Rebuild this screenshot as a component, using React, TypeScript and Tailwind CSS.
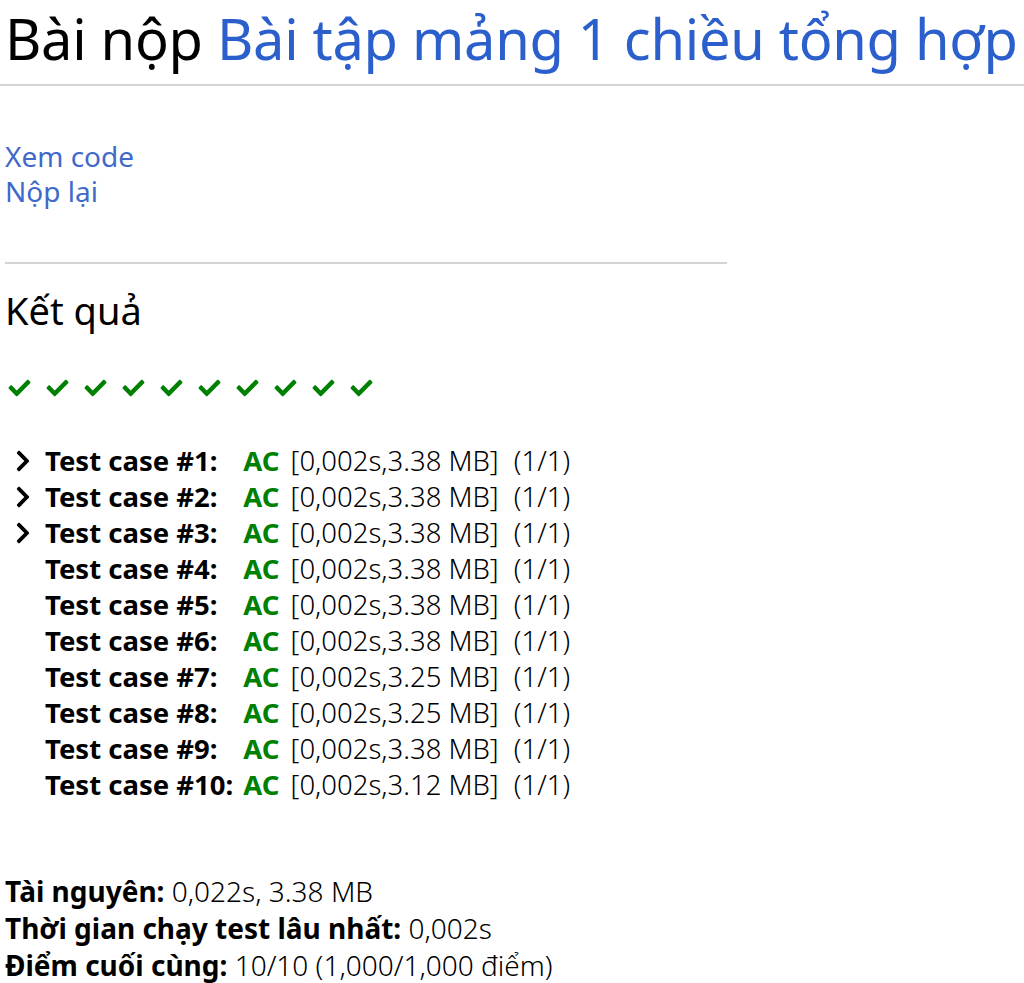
import React from 'react';

const FONT = { fontFamily: '"Noto Sans", "Open Sans", sans-serif' };

const CheckIcon: React.FC = () => (
  <svg viewBox="0 0 512 512" className="w-[23px] h-[22px] fill-[#008000]">
    <path d="M173.898 439.404l-166.4-166.4c-9.997-9.997-9.997-26.206 0-36.204l36.203-36.204c9.997-9.998 26.207-9.998 36.204 0L192 312.69 432.095 72.596c9.997-9.997 26.207-9.997 36.204 0l36.203 36.204c9.997 9.997 9.997 26.206 0 36.204l-294.4 294.401c-9.998 9.997-26.207 9.997-36.204-.001z" />
  </svg>
);

const Chevron: React.FC = () => (
  <svg viewBox="0 0 320 512" className="w-[18px] h-[24px] fill-black">
    <path d="M285.476 272.971L91.132 467.314c-9.373 9.373-24.569 9.373-33.941 0l-22.667-22.667c-9.357-9.357-9.375-24.522-.04-33.901L188.505 256 34.484 101.255c-9.335-9.379-9.317-24.544.04-33.901l22.667-22.667c9.373-9.373 24.569-9.373 33.941 0L285.475 239.03c9.373 9.372 9.373 24.568.001 33.941z" />
  </svg>
);

const cases = [
  { mem: '3.38', open: true },
  { mem: '3.38', open: true },
  { mem: '3.38', open: true },
  { mem: '3.38' },
  { mem: '3.38' },
  { mem: '3.38' },
  { mem: '3.25' },
  { mem: '3.25' },
  { mem: '3.38' },
  { mem: '3.12' },
];

export default function App() {
  return (
    <div className="bg-white min-h-[983px] overflow-hidden text-black" style={FONT}>
      <h2 className="pl-[5px] text-[56px] leading-[76px] font-normal whitespace-nowrap tracking-[-0.3px]">
        Bài nộp <a className="text-[#2a5fcc]">Bài tập mảng 1 chiều tổng hợp</a>
      </h2>
      <hr className="mt-[8px] border-t-2 border-[#d4d4d4]" />

      <div className="mt-[53px] pl-[5px] text-[28px] leading-[35px] text-[#4169c9]">
        <div><a>Xem code</a></div>
        <div><a>Nộp lại</a></div>
      </div>

      <hr className="mt-[53px] ml-[5px] w-[722px] border-t-2 border-[#d4d4d4]" />

      <h3 className="mt-[22px] pl-[5px] text-[38px] leading-[48px] font-normal">Kết quả</h3>

      <div className="mt-[43px] pl-[8px] flex gap-[15px]">
        {cases.map((_, i) => (
          <CheckIcon key={i} />
        ))}
      </div>

      <table className="mt-[44px] ml-[14px] text-[27.5px] leading-[36px]">
        <tbody>
          {cases.map((c, i) => (
            <tr key={i}>
              <td className="w-[31px] align-middle">{c.open && <Chevron />}</td>
              <td className="font-bold pr-[10px] whitespace-nowrap">Test case #{i + 1}:</td>
              <td className="whitespace-nowrap">
                <span className="font-bold text-[#008000]">AC</span>{' '}
                <span className="font-light ml-[4px]">[0,002s,{c.mem} MB]</span>{' '}
                <span className="font-light ml-[8px]">(1/1)</span>
              </td>
            </tr>
          ))}
        </tbody>
      </table>

      <div className="mt-[70px] pl-[5px] text-[28px] leading-[37px]">
        <div><b>Tài nguyên:</b> <span className="font-light">0,022s, 3.38 MB</span></div>
        <div><b>Thời gian chạy test lâu nhất:</b> <span className="font-light">0,002s</span></div>
        <div><b>Điểm cuối cùng:</b> <span className="font-light">10/10 (1,000/1,000 điểm)</span></div>
      </div>
    </div>
  );
}
